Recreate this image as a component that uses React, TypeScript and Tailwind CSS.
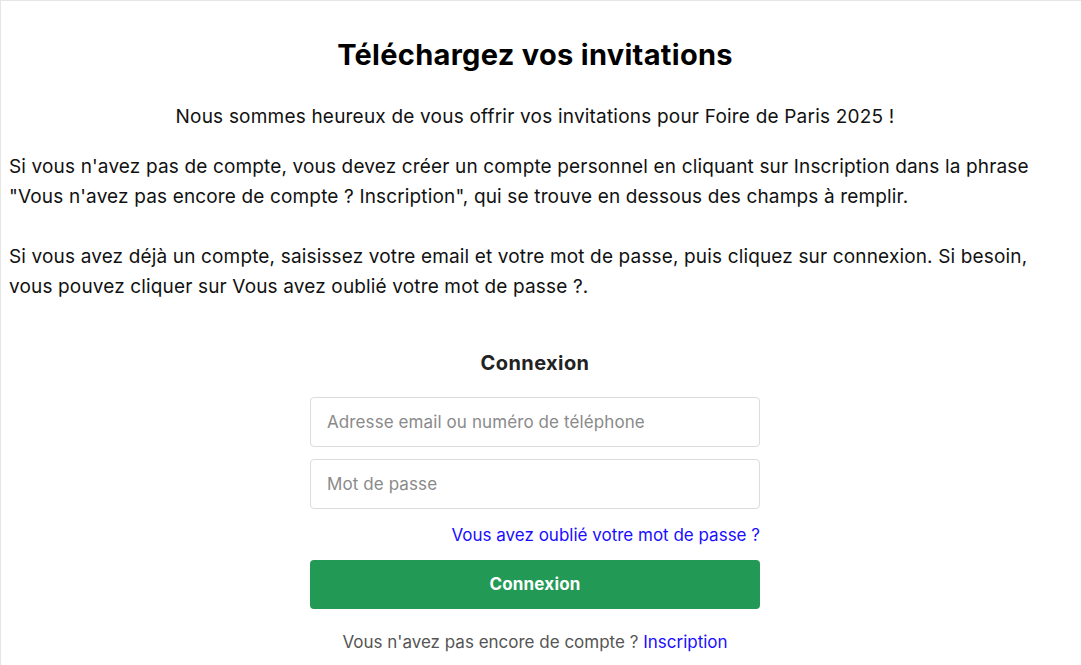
import React from 'react';

const font = { fontFamily: 'Inter, "Noto Sans", sans-serif' };

export default function App() {
  return (
    <div
      className="min-h-[665px] w-full bg-white border-t border-l border-[#e6e6e6] text-[#111] pr-[12px]"
      style={font}
    >
      <div className="px-2 pt-[34px]">
        {/* titre */}
        <h1 className="text-center text-[29px] leading-[40px] font-bold text-black tracking-[0.3px]">
          Téléchargez vos invitations
        </h1>

        <p className="mt-[27px] text-center text-[19px] leading-[30px] tracking-[0.2px]">
          Nous sommes heureux de vous offrir vos invitations pour Foire de Paris 2025 !
        </p>

        <div className="mt-[20px] text-[19px] leading-[30px] tracking-[0.15px]">
          <p>
            Si vous n'avez pas de compte, vous devez créer un compte personnel en cliquant sur Inscription dans la phrase
            "Vous n'avez pas encore de compte ? Inscription", qui se trouve en dessous des champs à remplir.
          </p>
          <p className="mt-[30px]">
            Si vous avez déjà un compte, saisissez votre email et votre mot de passe, puis cliquez sur connexion. Si besoin,
            vous pouvez cliquer sur Vous avez oublié votre mot de passe ?.
          </p>
        </div>
      </div>

      {/* formulaire */}
      <div className="mx-auto mt-[46px] w-[450px]">
        <h2 className="text-center text-[20px] leading-[30px] font-bold text-[#222] tracking-[0.4px]">Connexion</h2>

        <div className="mt-[19px] flex flex-col gap-[12px]">
          <input
            type="text"
            placeholder="Adresse email ou numéro de téléphone"
            className="h-[50px] w-full rounded-[4px] border border-[#dcdcdc] px-4 text-[17px] tracking-[0.1px] outline-none placeholder:text-[#8a8a8a]"
            style={font}
          />
          <input
            type="password"
            placeholder="Mot de passe"
            className="h-[50px] w-full rounded-[4px] border border-[#dcdcdc] px-4 text-[17px] tracking-[0.1px] outline-none placeholder:text-[#8a8a8a]"
            style={font}
          />
        </div>

        <div className="mt-[14px] text-right text-[17px] leading-[24px]">
          <a href="#" className="text-[#1a0dff]">Vous avez oublié votre mot de passe ?</a>
        </div>

        <button
          className="mt-[13px] h-[49px] w-full rounded-[4px] bg-[#229954] text-[17px] font-bold text-white tracking-[0.2px]"
          style={font}
        >
          Connexion
        </button>

        <p className="mt-[21px] text-center text-[17px] leading-[24px] text-[#555]">
          Vous n'avez pas encore de compte ? <a href="#" className="text-[#1a0dff]">Inscription</a>
        </p>
      </div>
    </div>
  );
}
